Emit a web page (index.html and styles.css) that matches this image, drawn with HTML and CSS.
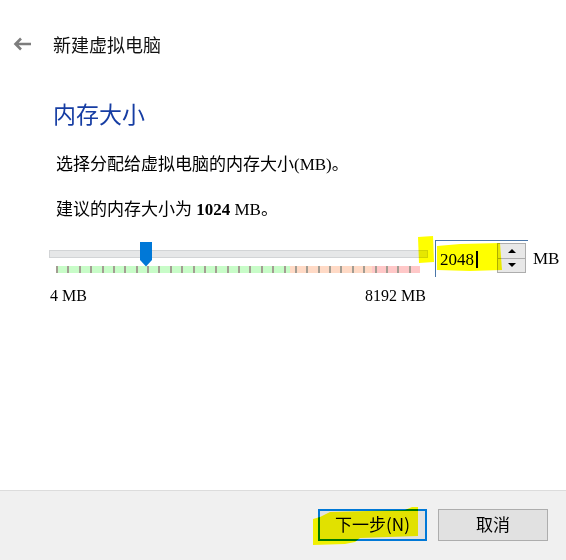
FILE: index.html
```html
<!DOCTYPE html>
<html lang="zh-CN">
<head>
<meta charset="utf-8">
<title>新建虚拟电脑</title>
<link rel="stylesheet" href="styles.css">
</head>
<body>
<div class="page">
  <header class="topbar">
    <svg class="back" viewBox="0 0 20 14"><path d="M19 7H3.5M9 1.5L3.5 7L9 12.5" fill="none" stroke="#7d7d7d" stroke-width="2.6"/></svg>
    <span class="title">新建虚拟电脑</span>
  </header>
  <main class="content">
    <h1 class="heading">内存大小</h1>
    <p class="text first">选择分配给虚拟电脑的内存大小(MB)。</p>
    <p class="text second">建议的内存大小为 <b>1024</b> MB。</p>
    <div class="mem-row">
      <div class="slider">
        <div class="track">
          <svg class="handle" viewBox="0 0 12 25"><path d="M0 0H12V18L6 24.5L0 18Z" fill="#0078d7"/></svg>
        </div>
        <div class="ticks">
          <i></i><i></i><i></i><i></i><i></i><i></i><i></i><i></i>
          <i></i><i></i><i></i><i></i><i></i><i></i><i></i><i></i>
          <i></i><i></i><i></i><i></i><i></i><i></i><i></i><i></i>
          <i></i><i></i><i></i><i></i><i></i><i></i><i></i><i></i>
        </div>
        <div class="scale"><span>4 MB</span><span>8192 MB</span></div>
      </div>
      <div class="spin">
        <span class="value">2048<i class="caret"></i></span>
        <div class="arrows">
          <span class="arrow"><i class="tri-up"></i></span>
          <span class="arrow"><i class="tri-down"></i></span>
        </div>
      </div>
      <span class="unit">MB</span>
    </div>
  </main>
  <footer class="buttons">
    <button class="btn primary">下一步(N)</button>
    <button class="btn">取消</button>
  </footer>
  <svg class="marker" width="566" height="560" viewBox="0 0 566 560">
    <path d="M418 237L433 236L434 262L419 263Z" fill="#ffff00"/>
    <path d="M437 246L460 244L500 243L502 270L470 271L437 270Z" fill="#ffff00"/>
    <path d="M313 519L320 517L330 512L405 510L412 507L418 507L418 536L360 538L355 542L345 544L313 545Z" fill="#ffff00"/>
  </svg>
</div>
</body>
</html>
```
FILE: styles.css
```css
body {
  margin: 0;
  background: #ffffff;
}

.page {
  position: relative;
  width: 566px;
  height: 560px;
  display: flex;
  flex-direction: column;
  overflow: hidden;
  background: #ffffff;
  color: #000000;
  font-family: "Liberation Serif", "Noto Sans CJK SC", serif;
}

.topbar {
  display: flex;
  align-items: center;
  height: 88px;
  padding-left: 12px;
  box-sizing: border-box;
}

.back {
  width: 20px;
  height: 14px;
  margin-right: 21px;
}

.title {
  font-family: "Noto Sans CJK SC", sans-serif;
  font-size: 18px;
  line-height: 24px;
  color: #111111;
}

.content {
  flex: 1;
  padding: 10px 0 0 49px;
}

.heading {
  margin: 0;
  padding-left: 4px;
  font-family: "Noto Sans CJK SC", sans-serif;
  font-weight: 400;
  font-size: 23px;
  line-height: 30px;
  color: #163da3;
}

.text {
  margin: 0;
  padding-left: 7px;
  font-size: 17px;
  line-height: 24px;
}

.text.first {
  margin-top: 25px;
}

.text.second {
  margin-top: 21px;
}

.mem-row {
  display: flex;
  align-items: flex-start;
  margin-top: 18px;
}

.slider {
  width: 379px;
  padding-top: 10px;
}

.track {
  position: relative;
  height: 8px;
  box-sizing: border-box;
  border: 1px solid #d2d4d6;
  background: #e6e7e8;
}

.handle {
  position: absolute;
  left: 90px;
  top: -9px;
  width: 12px;
  height: 25px;
}

.ticks {
  display: flex;
  margin: 8px 0 0 7px;
  width: 364px;
  height: 7px;
  background: linear-gradient(90deg, #c8fcc8 0 234px, #ffdac6 234px 316px, #ffc8c8 316px 364px);
}

.ticks i {
  flex: 1;
  border-left: 2px solid #a39d92;
}

.scale {
  display: flex;
  justify-content: space-between;
  margin-top: 12px;
  padding: 0 2px 0 1px;
  font-size: 16px;
  line-height: 22px;
}

.spin {
  display: flex;
  align-items: flex-start;
  margin-left: 7px;
  width: 93px;
  height: 37px;
  box-sizing: border-box;
  border-top: 1px solid #4a76a8;
  border-left: 1px solid #4a76a8;
  padding: 2px 2px 0 4px;
}

.value {
  flex: 1;
  display: flex;
  align-items: center;
  font-size: 17px;
  line-height: 31px;
  padding-top: 1px;
}

.caret {
  display: inline-block;
  width: 2px;
  height: 17px;
  margin-left: 2px;
  background: #000000;
}

.arrows {
  width: 29px;
  height: 30px;
  box-sizing: border-box;
  border: 1px solid #adadad;
  background: #e8e8e8;
  display: flex;
  flex-direction: column;
}

.arrow {
  flex: 1;
  display: flex;
  align-items: center;
  justify-content: center;
}

.arrow + .arrow {
  border-top: 1px solid #adadad;
}

.tri-up {
  width: 0;
  height: 0;
  border-left: 4px solid transparent;
  border-right: 4px solid transparent;
  border-bottom: 4px solid #000000;
}

.tri-down {
  width: 0;
  height: 0;
  border-left: 4px solid transparent;
  border-right: 4px solid transparent;
  border-top: 4px solid #000000;
}

.unit {
  margin-left: 5px;
  font-size: 17px;
  line-height: 38px;
}

.buttons {
  height: 70px;
  box-sizing: border-box;
  border-top: 1px solid #dcdcdc;
  background: #f0f0f0;
  display: flex;
  justify-content: flex-end;
  align-items: flex-start;
  gap: 11px;
  padding: 18px 18px 0 0;
}

.btn {
  width: 110px;
  height: 32px;
  box-sizing: border-box;
  border: 1px solid #adadad;
  background: #e1e1e1;
  padding: 0 0 3px;
  font-family: "Noto Sans CJK SC", sans-serif;
  font-size: 17px;
  color: #000000;
}

.btn.primary {
  width: 109px;
  border: 2px solid #0078d7;
}

.marker {
  position: absolute;
  left: 0;
  top: 0;
  pointer-events: none;
  mix-blend-mode: multiply;
}
```
